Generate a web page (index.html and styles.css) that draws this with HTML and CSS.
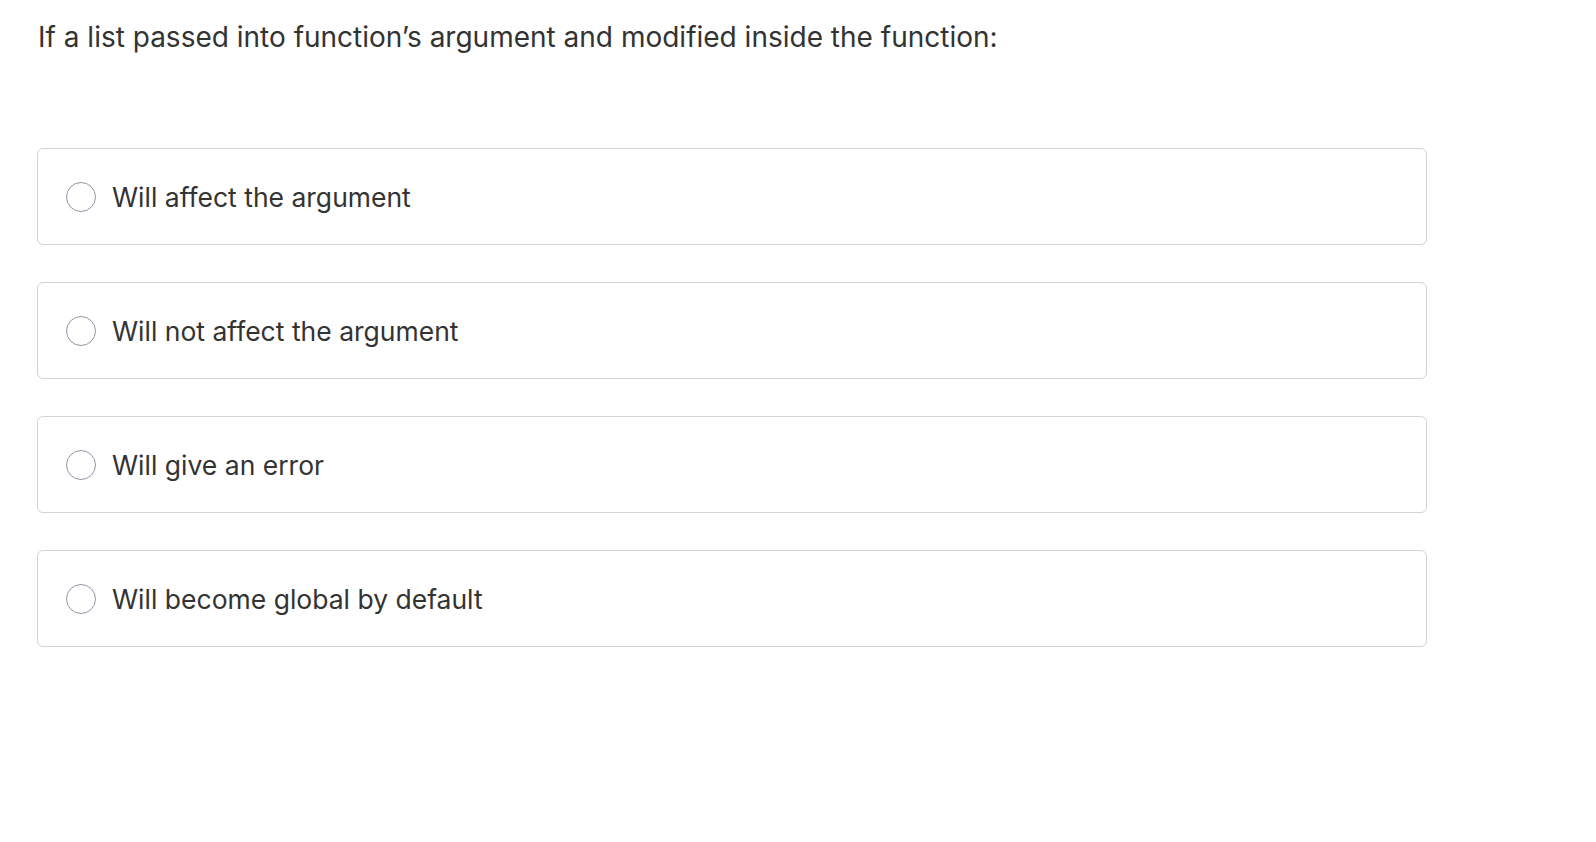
FILE: index.html
```html
<!DOCTYPE html>
<html>
<head>
<meta charset="utf-8">
<link rel="stylesheet" href="styles.css">
</head>
<body>
<div class="page">
  <h1 class="question">If a list passed into function’s argument and modified inside the function:</h1>
  <div class="options">
    <label class="option"><span class="radio"></span><span class="label">Will affect the argument</span></label>
    <label class="option"><span class="radio"></span><span class="label">Will not affect the argument</span></label>
    <label class="option"><span class="radio"></span><span class="label">Will give an error</span></label>
    <label class="option"><span class="radio"></span><span class="label">Will become global by default</span></label>
  </div>
</div>
</body>
</html>
```
FILE: styles.css
```css
html, body {
  margin: 0;
  padding: 0;
  background: #ffffff;
}
body {
  font-family: Inter, "Noto Sans", sans-serif;
  color: #333333;
}
.page {
  padding: 17px 0 0 38px;
}
.question {
  margin: 0;
  font-size: 28px;
  font-weight: 400;
  line-height: 40px;
}
.options {
  margin-top: 91px;
  display: flex;
  flex-direction: column;
  gap: 37px;
  width: 1390px;
  margin-left: -1px;
}
.option {
  height: 97px;
  border: 1px solid #d4d4d4;
  border-radius: 6px;
  display: flex;
  align-items: center;
  box-sizing: border-box;
  padding-left: 28px;
}
.radio {
  width: 30px;
  height: 30px;
  border: 1px solid #8e96a6;
  border-radius: 50%;
  box-sizing: border-box;
  flex: none;
}
.label {
  margin-left: 16px;
  font-size: 26.5px;
  padding-top: 1px;
}
```
